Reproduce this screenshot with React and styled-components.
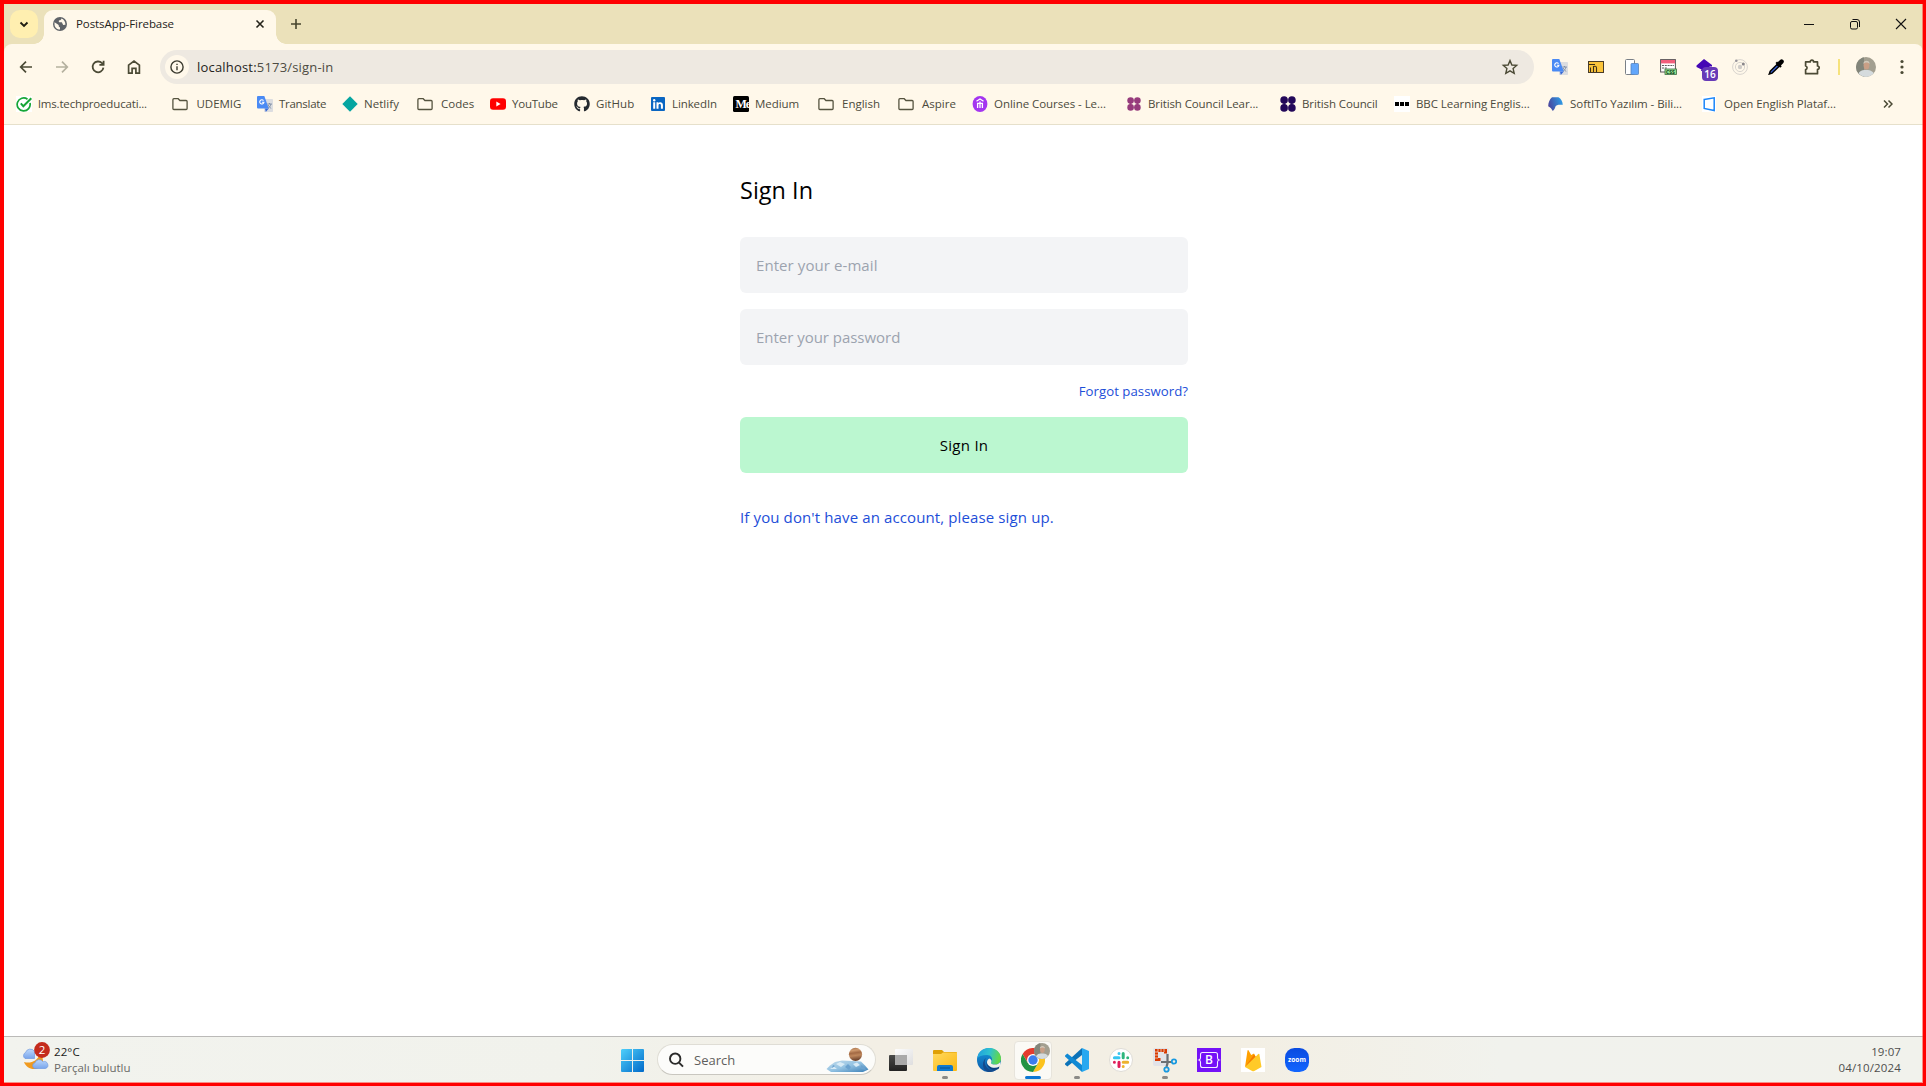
import React from "react";
import styled, { createGlobalStyle } from "styled-components";
import { FaGithub } from "react-icons/fa";

const GlobalStyle = createGlobalStyle`
  *, *::before, *::after { box-sizing: border-box; }
  body { margin: 0; background: #fff; font-family: "Open Sans", "Noto Sans", sans-serif; }
  svg { display: block; flex: none; }
`;

/* ---------- frame ---------- */

const Screen = styled.div`
  position: relative;
  width: 1926px;
  height: 1086px;
  overflow: hidden;
  display: flex;
  flex-direction: column;
  background: #fff;
  border: solid #ff0000;
  border-width: 4px 3px 3px 4px;

  &::after {
    content: "";
    position: absolute;
    inset: 0;
    pointer-events: none;
    border: solid rgba(255, 60, 50, 0.55);
    border-width: 0 1px 1px 0;
  }
`;

const Label = styled.span`
  font-size: ${(p) => p.$size || 11.5}px;
  letter-spacing: ${(p) => p.$ls || 0}px;
  color: ${(p) => p.$color || "#4b4a3c"};
  line-height: 16px;
  white-space: pre;
`;

/* ---------- browser chrome ---------- */

const Browser = styled.header`
  flex: none;
  background: #ebe1ba;
`;

const TabStrip = styled.div`
  display: flex;
  height: 40px;
`;

const TabSearch = styled.button`
  width: 28px;
  height: 28px;
  margin: 6px 6px 0 6px;
  padding: 0;
  border: 0;
  border-radius: 10px;
  background: #ffefb0;
  display: grid;
  place-items: center;
`;

const Tab = styled.div`
  position: relative;
  width: 232px;
  height: 34px;
  margin-top: 6px;
  padding: 0 10px 6px 9px;
  border-radius: 9px 9px 0 0;
  background: #fff8ea;
  display: flex;
  align-items: center;

  &::before,
  &::after {
    content: "";
    position: absolute;
    bottom: 0;
    width: 10px;
    height: 10px;
  }
  &::before {
    left: -10px;
    background: radial-gradient(circle at 0 0, transparent 9.5px, #fff8ea 10px);
  }
  &::after {
    right: -10px;
    background: radial-gradient(circle at 100% 0, transparent 9.5px, #fff8ea 10px);
  }
`;

const TabTitle = styled(Label)`
  flex: 1;
  margin-left: 9px;
  color: #24231a;
`;

const NewTab = styled.div`
  margin: 12px 0 0 12px;
`;

const WindowControls = styled.div`
  margin-left: auto;
  height: 40px;
  display: grid;
  grid-template-columns: repeat(3, 46px);
  place-items: center;
  margin-right: -1px;
`;

const Toolbar = styled.div`
  height: 46px;
  display: flex;
  align-items: center;
  background: #fff8ea;
  border-radius: 8px 8px 0 0;
`;

const NavButtons = styled.div`
  display: grid;
  grid-template-columns: repeat(4, 36px);
  place-items: center;
  margin-left: 4px;
`;

const AddressBar = styled.div`
  width: 1374px;
  height: 34px;
  margin-left: 8px;
  padding: 0 15px 0 5px;
  border-radius: 17px;
  background: #eee9e1;
  display: flex;
  align-items: center;
`;

const SiteInfo = styled.div`
  width: 24px;
  height: 24px;
  border-radius: 50%;
  background: #fff8ea;
  display: grid;
  place-items: center;
`;

const Url = styled(Label)`
  flex: 1;
  margin-left: 8px;
  font-size: 13px;
  letter-spacing: 0.19px;
  color: #4d4b42;

  b {
    font-weight: 400;
    color: #24231b;
  }
`;

const Extensions = styled.div`
  display: grid;
  grid-template-columns: repeat(8, 36px);
  place-items: center;
  margin-left: 8px;
`;

const ExtensionWithBadge = styled.div`
  position: relative;
  width: 16px;
  height: 16px;
`;

const Badge = styled.span`
  position: absolute;
  left: 6px;
  top: 8px;
  width: 16px;
  height: 14px;
  border-radius: 4px;
  background: #673ab7;
  color: #fff;
  font-size: 10px;
  font-weight: 600;
  line-height: 14px;
  text-align: center;
`;

const Divider = styled.div`
  width: 2px;
  height: 16px;
  margin-left: 8px;
  background: #f6e27c;
`;

const Avatar = styled.div`
  width: 20px;
  height: 20px;
  margin-left: 16px;
  border-radius: 50%;
  overflow: hidden;
`;

const MenuButton = styled.div`
  margin-left: 18px;
`;

const BookmarksBar = styled.nav`
  height: 35px;
  padding: 0 0 6px 12px;
  display: flex;
  align-items: center;
  background: #fff8ea;
  border-bottom: 1px solid #e6e0cb;
`;

const Bookmark = styled.a`
  width: ${(p) => p.$w}px;
  flex: none;
  display: flex;
  align-items: center;
  gap: ${(p) => p.$gap || 6}px;
`;

const Overflow = styled.div`
  margin-left: 26px;
`;

/* ---------- sign in page ---------- */

const Page = styled.main`
  flex: 1;
  display: flex;
  justify-content: center;
  padding: 47px 0 0 1px;
`;

const Form = styled.form`
  width: 448px;
  display: flex;
  flex-direction: column;
`;

const Title = styled.h1`
  margin: 0 0 29px;
  font-size: 23.4px;
  line-height: 36px;
  font-weight: 400;
  letter-spacing: 0.05px;
  color: #000;
`;

const Field = styled.input`
  height: 56px;
  margin: 0 0 16px;
  padding: 0 16px;
  border: 0;
  border-radius: 6px;
  background: #f3f4f6;
  font: 400 15px "Open Sans", "Noto Sans", sans-serif;
  letter-spacing: ${(p) => p.$ls}px;

  &::placeholder {
    color: #9ca3af;
    opacity: 1;
  }
`;

const Forgot = styled.a`
  align-self: flex-end;
  height: 20px;
  margin-bottom: 16px;
  font-size: 13.2px;
  line-height: 20px;
  letter-spacing: 0.04px;
  color: #1d4ed8;
`;

const Submit = styled.button`
  height: 56px;
  border: 0;
  border-radius: 6px;
  background: #bbf7d0;
  font: 400 15px "Open Sans", "Noto Sans", sans-serif;
  letter-spacing: 0.3px;
  color: #000;
`;

const SignUp = styled.a`
  margin-top: 32px;
  font-size: 15px;
  line-height: 24px;
  letter-spacing: 0.12px;
  color: #1d4ed8;
`;

/* ---------- taskbar ---------- */

const Taskbar = styled.footer`
  flex: none;
  height: 47px;
  display: flex;
  border-top: 1px solid #bbbab8;
  background: linear-gradient(90deg, #f2f3ee 0%, #f1f2ec 30%, #f3efe5 45%, #f3efe4 65%, #f1f2ed 78%, #f1f2ec 100%);
`;

const Weather = styled.div`
  width: 606px;
  padding: 5px 0 0 17px;
  display: flex;
`;

const WeatherIcon = styled.div`
  width: 31px;
  margin-right: 2px;
`;

const Lines = styled.div`
  display: flex;
  flex-direction: column;
  padding-top: ${(p) => p.$top || 0}px;
  text-align: ${(p) => p.$align || "left"};
`;

const StartCell = styled.div`
  width: 47px;
  padding: 12px 0 0 11px;
`;

const SearchBox = styled.div`
  width: 219px;
  height: 31px;
  margin: 7px 3px 0 0;
  padding: 0 6px 0 10px;
  display: flex;
  align-items: center;
  border-radius: 16px;
  border: 1px solid #dfddd5;
  border-bottom-color: #c9c7c0;
  background: #fcfcfa;
`;

const SearchLabel = styled(Label)`
  flex: 1;
  margin-left: 10px;
`;

const AppCell = styled.div`
  position: relative;
  width: 44px;
  height: 46px;
  display: grid;
  justify-items: center;
  align-content: start;
  padding-top: 11px;

  &::after {
    content: "";
    display: ${(p) => (p.$running || p.$active ? "block" : "none")};
    position: absolute;
    bottom: 4px;
    left: 50%;
    transform: translateX(-50%);
    width: ${(p) => (p.$active ? 16 : 6)}px;
    height: 3px;
    border-radius: 2px;
    background: ${(p) => (p.$active ? "#0d78d4" : "#8b8a86")};
  }
`;

const ActiveTile = styled.div`
  position: absolute;
  left: 3px;
  top: 4px;
  width: 38px;
  height: 39px;
  border-radius: 4px;
  background: #fbfaf6;
  border: 1px solid #e7e4dc;
`;

const Over = styled.div`
  position: relative;
`;

const ProfileBadge = styled.div`
  position: absolute;
  right: -5px;
  top: -5px;
  width: 16px;
  height: 16px;
  border-radius: 50%;
  overflow: hidden;
`;

const Clock = styled.div`
  margin-left: auto;
  padding: 7px 22px 0 0;
`;

/* ---------- icons ---------- */

const ink = "#4b4a35";

const Stroke = ({ size = 16, w = 1.7, c = ink, children }) => (
  <svg width={size} height={size} viewBox={`0 0 ${size} ${size}`} fill="none" stroke={c} strokeWidth={w}>
    {children}
  </svg>
);

const Globe = () => (
  <svg width="14" height="14" viewBox="0 0 14 14">
    <circle cx="7" cy="7" r="7" fill="#5f6368" />
    <path d="M1.5 5.2 5 7.6c1 .7.8 1.5.8 2l1.2.8v2.1c-3 0-5.6-2.4-5.5-5.6zM8.2 1.6c.2 1-.3 1.4-1.2 1.6-.9.1-1.4.4-1.2 1.2.1.8.9 1 2 .9 1.4-.1 1.5.6 1.7 1.5.2.9 1 1.1 2.8 1.1A5.6 5.6 0 0 0 8.2 1.6z" fill="#fff8ea" />
  </svg>
);

const Folder = () => (
  <Stroke w={1.3} c="#55533f">
    <path d="M1.9 2.7h4.3l1.7 1.8h6.2q1 0 1 1v7q0 1-1 1H1.9q-1 0-1-1V3.7q0-1 1-1z" />
  </Stroke>
);

const Translate = () => (
  <svg width="16" height="16" viewBox="0 0 16 16">
    <rect x="7" y="3" width="9" height="13" rx=".8" fill="#dcdde0" />
    <path d="M10.3 8h4.6M12.5 7v1M14 8c-.4 1.8-1.5 3.3-3 4.3M11.2 9c.5 1.4 1.5 2.5 3 3.3" stroke="#7b8ba3" strokeWidth=".9" fill="none" />
    <path d="M8 12.5h3.8L8.8 16z" fill="#3367d6" />
    <path d="M1 0h6.3l4.5 12.5H1q-1 0-1-1V1q0-1 1-1z" fill="#4a8af4" />
    <path d="M6.5 4.6a2.1 2.1 0 1 0 .4 1.7H4.900" stroke="#fff" strokeWidth="1.1" fill="none" />
  </svg>
);

const LmsCheck = () => (
  <svg width="16" height="16" viewBox="0 0 16 16" fill="none">
    <rect width="16" height="16" fill="#fff" />
    <path d="M14 7A6.5 6.5 0 1 1 11.5 3.2" stroke="#16a637" strokeWidth="1.7" />
    <path d="M4.8 7.4 7.3 10.2 15.3 2.2" stroke="#16a637" strokeWidth="2" />
  </svg>
);

const Netlify = () => (
  <svg width="16" height="16" viewBox="0 0 16 16"><path d="M8 .3 15.7 8 8 15.7.3 8z" fill="#05a5a0" /></svg>
);

const YouTube = () => (
  <svg width="16" height="16" viewBox="0 0 16 16">
    <rect y="2.3" width="16" height="11.4" rx="3" fill="#f00" />
    <path d="M6.3 5.6 10.6 8l-4.3 2.4z" fill="#fff" />
  </svg>
);

const LinkedIn = () => (
  <svg width="14" height="14" viewBox="0 0 14 14">
    <rect width="14" height="14" rx="1" fill="#0a66c2" />
    <path d="M2.2 5.3h2v6.5h-2zM5.5 5.3h1.9v.9c.8-1.5 4.5-1.6 4.5 1.7v3.9h-2V8.4c0-2-2.4-1.8-2.4 0v3.4h-2z" fill="#fff" />
    <circle cx="3.2" cy="3.2" r="1.2" fill="#fff" />
  </svg>
);

const Medium = () => (
  <svg width="16" height="16" viewBox="0 0 16 16">
    <defs><clipPath id="medium"><rect width="16" height="16" rx="1.5" /></clipPath></defs>
    <g clipPath="url(#medium)">
      <rect width="16" height="16" fill="#000" />
      <text x="2.5" y="12" fontFamily="Liberation Serif, serif" fontWeight="700" fontSize="12" fill="#fff" letterSpacing="-1">Me</text>
    </g>
  </svg>
);

const Udemy = () => (
  <svg width="16" height="16" viewBox="0 0 16 16" fill="none" stroke="#fff">
    <ellipse cx="8" cy="8" rx="7.4" ry="8" fill="#a435f0" stroke="none" />
    <path d="M4.5 5.2 8 3l3.5 2.2" strokeWidth="1.3" />
    <path d="M5.6 12V7.3h4.8V12M8 5.6v6.4" strokeWidth="1.3" />
  </svg>
);

const Dots4 = ({ color, r }) => (
  <svg width="16" height="16" viewBox="0 0 16 16" fill={color}>
    <circle cx={8 - r} cy={8 - r} r={r - 0.1} /><circle cx={8 + r} cy={8 - r} r={r - 0.1} />
    <circle cx={8 - r} cy={8 + r} r={r - 0.1} /><circle cx={8 + r} cy={8 + r} r={r - 0.1} />
    <path d="M3.5 6h2v4h-2zM10.5 6h2v4h-2z" opacity=".6" />
  </svg>
);

const Bbc = () => (
  <svg width="16" height="16" viewBox="0 0 16 16">
    <rect width="16" height="16" fill="#fff" />
    <path d="M1 6h4v4H1zM6 6h4v4H6zM11 6h4v4h-4z" fill="#000" />
  </svg>
);

const SoftIto = () => (
  <svg width="16" height="16" viewBox="0 0 16 16">
    <defs><linearGradient id="ito" x1="0" y1=".6" x2="1" y2=".3"><stop stopColor="#4b449b" /><stop offset="1" stopColor="#2d9ee8" /></linearGradient></defs>
    <path d="M4 1.2h6.5c2.5 1.5 4 4 4.3 7.6-4.5-.3-6.8.2-7.3 1.7-.5 2-1.3 3.2-2.7 4.5-1-2-2.3-3.6-4.6-4.8C.3 6.500 1.500 3.500 4 1.200z" fill="url(#ito)" />
  </svg>
);

const OpenEnglish = () => (
  <svg width="16" height="16" viewBox="0 0 16 16">
    <rect width="14" height="16" fill="#fff" />
    <path d="M2.200 3.500 12.200 1.800v12.700L2.200 12.500z" fill="none" stroke="#1b86f9" strokeWidth="1.5" />
  </svg>
);

const Face = ({ size }) => (
  <svg width={size} height={size} viewBox="0 0 20 20">
    <rect width="20" height="20" fill="#a39f90" />
    <path d="M0 0h8v20H0z" fill="#82857a" />
    <path d="M2 20c0-5.500 3-7 8-7s8 1.500 9 7z" fill="#d5dbdd" />
    <ellipse cx="10.500" cy="8.200" rx="2.900" ry="4.200" fill="#c99f86" />
    <path d="M7.300 7C7 2.500 14 2.500 13.700 7 12 5 9 5 7.300 7z" fill="#cfc8ba" />
  </svg>
);

const MagicFolder = () => (
  <svg width="16" height="12" viewBox="0 0 16 12">
    <rect x=".5" y=".5" width="15" height="11" fill="#fbc43a" stroke="#4a3c28" strokeWidth="1" />
    <path d="M1 3.500h6M2.500 11V6.500M5.500 11V5.500q3-1 3 1.500v4" fill="none" stroke="#3a2e18" strokeWidth="1.100" />
  </svg>
);

const Devices = () => (
  <svg width="14" height="16" viewBox="0 0 14 16">
    <rect x=".5" y=".5" width="9" height="15" rx="1" fill="#fff" stroke="#7a8087" strokeWidth="1" />
    <rect x="6" y="4.500" width="7.500" height="11" rx=".8" fill="#62a6fb" stroke="#5583bd" strokeWidth=".8" />
  </svg>
);

const CssViewer = () => (
  <svg width="17" height="16" viewBox="0 0 17 16">
    <rect x=".6" y=".6" width="14.800" height="12.400" fill="#fff" stroke="#5a5256" strokeWidth="1" />
    <rect x="1" y="1" width="14" height="3.400" fill="#f25f7c" />
    <path d="M2 6.500h12M2 9h5" stroke="#5b5b5b" strokeWidth="1" strokeDasharray="2 .8" />
    <rect x="5" y="10" width="11.500" height="5.500" fill="#8fe08e" stroke="#3c6b41" strokeWidth=".8" />
    <text x="6" y="14.700" fontFamily="Open Sans, sans-serif" fontWeight="700" fontSize="5" fill="#123c1a">CSS</text>
  </svg>
);

const PurpleHat = () => (
  <svg width="16" height="16" viewBox="0 0 16 16"><path d="M8 0 16 6v1.500h-2.500V12H5l.5-1.500L.5 8V6.500z" fill="#4407b5" /></svg>
);

const Orbit = () => (
  <svg width="16" height="16" viewBox="0 0 16 16" fill="none" stroke="#d8d4ce">
    <circle cx="8" cy="8" r="7.400" /><circle cx="8" cy="8" r="4.600" />
    <circle cx="8" cy="8" r="2.200" fill="#cfccc8" stroke="none" />
    <circle cx="4.300" cy="1.800" r="1.300" fill="#97949a" stroke="none" />
    <circle cx="11.300" cy="5" r="1.500" fill="#88858a" stroke="none" />
  </svg>
);

const Dropper = () => (
  <svg width="16" height="16" viewBox="0 0 16 16">
    <path d="M9.600 5 2.300 12.200 1.300 15l2.800-.9L11.500 7z" fill="#3b64d8" stroke="#000" strokeWidth="1.500" />
    <path d="M8.300 3.300 13 8" stroke="#000" strokeWidth="2.200" />
    <path d="M10.800 5.400 13.600 2.600" stroke="#000" strokeWidth="4.400" strokeLinecap="round" />
  </svg>
);

const Puzzle = () => (
  <Stroke w={1.7}>
    <path d="M1.600 2.900h4.600a1.700 1.700 0 0 1 3.400 0H13.500v4.100a1.700 1.700 0 0 1 0 3.400v4.300H1.600v-4a1.900 1.900 0 0 0 0-3.700z" strokeLinejoin="round" />
  </Stroke>
);

const WeatherGlyph = () => (
  <svg width="31" height="32" viewBox="0 -2 31 32">
    <defs><linearGradient id="cl" x2="0" y2="1"><stop stopColor="#bcd8fb" /><stop offset="1" stopColor="#78a5ec" /></linearGradient></defs>
    <path d="M19 10c5 4 4 14-5 15-5 .4-9-2-11-7 7 2 13-1 16-8z" fill="#f09a1e" />
    <path d="M4 14.500a3.500 3.500 0 0 1 .5-6 5 5 0 0 1 9-1v7z" fill="url(#cl)" stroke="#6f9ae0" strokeWidth=".7" />
    <path d="M13.500 24.500a3 3 0 0 1 .5-5.700 4.400 4.400 0 0 1 8-1 3.500 3.500 0 0 1 2.500 6.700z" fill="url(#cl)" stroke="#6f9ae0" strokeWidth=".7" />
    <circle cx="21" cy="6" r="7.900" fill="#c42b1c" />
    <text x="21" y="10" textAnchor="middle" fontFamily="Open Sans, sans-serif" fontSize="11.500" fill="#fff">2</text>
  </svg>
);

const Windows = () => (
  <svg width="23" height="23" viewBox="0 0 23 23">
    <defs><linearGradient id="win" gradientUnits="userSpaceOnUse" x1="0" y1="0" x2="23" y2="23"><stop stopColor="#4fd0fb" /><stop offset="1" stopColor="#0069c9" /></linearGradient></defs>
    <path d="M1 0h10v11H0V1zM12 0h10q1 0 1 1v10H12zM0 12h11v11H1q-1 0-1-1zM12 12h11v10q0 1-1 1H12z" fill="url(#win)" />
  </svg>
);

const SearchArt = () => (
  <svg width="44" height="26" viewBox="0 0 44 26">
    <defs>
      <linearGradient id="planet" x2=".15" y2="1"><stop stopColor="#a06c46" /><stop offset=".25" stopColor="#cf9a6e" /><stop offset=".45" stopColor="#a36a44" /><stop offset=".65" stopColor="#bf875c" /><stop offset="1" stopColor="#6e432c" /></linearGradient>
      <linearGradient id="ice" x2="1" y2="1"><stop stopColor="#c3dcec" /><stop offset=".5" stopColor="#93c2e2" /><stop offset="1" stopColor="#3b7fb6" /></linearGradient>
    </defs>
    <path d="M1.500 22 5 18.500l5-3.500 7-1.500 10 .5 9 .5 4 4 3.500 4L38 25H6z" fill="url(#ice)" />
    <path d="m11 17 4-2 5 2-4 3zM28 17l4-1.500 3 2.500-4 2zM5 22l4-2.500 3 2.500z" fill="#d8ebf6" />
    <path d="m20 20 3-3 3 3-2 3zM36 18l3 2 2 3-5-1zM8 18l2 1-3 2z" fill="#6ba2cf" />
    <circle cx="30.500" cy="7.300" r="6.600" fill="url(#planet)" />
  </svg>
);

const TaskView = () => (
  <svg width="24" height="24" viewBox="0 0 24 24">
    <defs>
      <linearGradient id="tvb" x2="0" y2="1"><stop stopColor="#4a4a49" /><stop offset="1" stopColor="#222" /></linearGradient>
      <linearGradient id="tvf" x2="1" y2="1"><stop stopColor="#fdfdfd" /><stop offset="1" stopColor="#dededf" /></linearGradient>
    </defs>
    <rect y="7" width="18" height="16" rx="1" fill="url(#tvb)" />
    <rect x="6" y="1" width="18" height="16" rx="1" fill="url(#tvf)" />
    <path d="M6 7h12v10H6z" fill="#a9a9a9" />
  </svg>
);

const Explorer = () => (
  <svg width="24" height="24" viewBox="0 0 24 24">
    <defs><linearGradient id="exp" x2="1" y2="1"><stop stopColor="#ffd95e" /><stop offset="1" stopColor="#fcb813" /></linearGradient></defs>
    <path d="M0 3q0-1 1-1h8l2 2h12q1 0 1 1v4H0z" fill="#dfa005" />
    <path d="M0 6h8l2-1.500h14V22q0 1-1 1H1q-1 0-1-1z" fill="url(#exp)" />
    <path d="M4 23v-4q0-2 2-2h12q2 0 2 2v4z" fill="#0f7ad0" />
    <path d="M7 20h10" stroke="#084f8e" strokeWidth="1" />
  </svg>
);

const Edge = () => (
  <svg width="24" height="24" viewBox="0 0 24 24">
    <defs>
      <linearGradient id="ea" x2="1" y2=".2"><stop stopColor="#1e9de0" /><stop offset=".55" stopColor="#2fc2cf" /><stop offset="1" stopColor="#62d849" /></linearGradient>
      <linearGradient id="eb" x2="0" y2="1"><stop stopColor="#1799dd" /><stop offset="1" stopColor="#0c5aa8" /></linearGradient>
    </defs>
    <circle cx="12" cy="12" r="12" fill="url(#eb)" />
    <path d="M.2 10.500C1 4 6 0 12 0c7 0 12 4.800 12 10.500 0 4-3 6-6.300 6-3.500 0-4.200-1.500-3.400-2.600 2.200-3.300-.4-6.800-4.300-6.800C5 7.100 1.500 8.500.2 10.500z" fill="url(#ea)" />
    <path d="M9 10c-3 4-.5 11.500 6 12.200 3 .2 5.500-1 7.500-3.600C20 23 16 24.200 11.500 24 5.500 23 4 14 9 10z" fill="#144a8c" />
    <path d="M9.500 12.500c-.3 3.500 3 7.300 8 7.300 2 0 3.500-.5 5-1.400l-1 2.600c-6 2.500-13-1-12-8.500z" fill="#0f3f7d" />
    <path d="M14.300 13.900c-.8 1.100 0 2.600 3.400 2.600 2.300 0 4.600-1 5.600-2.600.2 1.600.1 3.200-.9 4.600-5 3-11.500.5-12.400-4 0-2 1-3.400 2.200-4.100 1.800.6 2.800 2 2.100 3.500z" fill="#f4f1e8" />
  </svg>
);

const Chrome = () => (
  <svg width="24" height="24" viewBox="0 0 24 24">
    <path d="M1.600 6A12 12 0 0 1 22.400 6H12L6.800 15z" fill="#e33b2e" />
    <path d="M22.400 6A12 12 0 0 1 12 24l5.200-9L12 6z" fill="#fcc31e" />
    <path d="M1.600 6A12 12 0 0 0 12 24l5.200-9H6.800z" fill="#229342" />
    <circle cx="12" cy="12" r="6" fill="#fff" />
    <circle cx="12" cy="12" r="4.700" fill="#3b7ded" />
  </svg>
);

const VsCode = () => (
  <svg width="24" height="24" viewBox="0 0 24 24">
    <path d="M17 0 24 3v18l-7 3z" fill="#27a8f0" />
    <path d="M17 0v7L2.300 18.500.3 16.700q-.6-.8 0-1.500z" fill="#0b72b8" />
    <path d="M17 24v-7L2.300 5.500.3 7.300q-.6.8 0 1.500z" fill="#1089d4" />
  </svg>
);

const Slack = () => (
  <svg width="24" height="24" viewBox="0 0 24 24">
    <circle cx="12" cy="12" r="11.500" fill="#fff" stroke="#dedbd5" />
    <g strokeWidth="3" strokeLinecap="round">
      <path d="M10 5.400h0M5.400 9.800h4.600" stroke="#36c5f0" />
      <path d="M14.200 5.400v4.400M18.700 9.800h0" stroke="#2eb67d" />
      <path d="M14.200 14.200h4.500M14.200 18.600h0" stroke="#ecb22e" />
      <path d="M10 14.200v4.400M5.400 14.200h0" stroke="#e01e5a" />
    </g>
  </svg>
);

const Snip = () => (
  <svg width="24" height="26" viewBox="0 0 24 26" fill="none">
    <rect x="0" y="0" width="16" height="18" rx="2" fill="#e2e3e8" />
    <path d="M2 1h12v4.500h-3V4H5v6h2.500v3H2z" fill="#d83b01" />
    <path d="M5 1v3M8 1v3M11 1v3M2 4h3M2 7h3M2 10h3" stroke="#f3d8ce" strokeWidth=".8" />
    <path d="M14.500 6v9l-1 4M8 14h11" stroke="#6b7075" strokeWidth="2.200" />
    <circle cx="21" cy="13.500" r="2.200" stroke="#1899e0" strokeWidth="1.800" />
    <circle cx="13.500" cy="21.500" r="2.200" stroke="#1899e0" strokeWidth="1.800" />
  </svg>
);

const Bootstrap = () => (
  <svg width="24" height="24" viewBox="0 0 24 24">
    <rect width="24" height="24" fill="#7411f7" />
    <path d="M5.500 4.500h13q2 0 2 2v3.300q0 1.700 1.500 2.200-1.500.5-1.500 2.200v3.300q0 2-2 2h-13q-2 0-2-2v-3.300Q3.500 12.500 2 12q1.500-.5 1.500-2.200V6.500q0-2 2-2z" fill="none" stroke="#f5edff" strokeWidth="1.100" />
    <text x="12" y="16.200" textAnchor="middle" fontFamily="Open Sans, sans-serif" fontWeight="600" fontSize="12" fill="#fff">B</text>
  </svg>
);

const Firebase = () => (
  <svg width="24" height="24" viewBox="0 0 24 24">
    <rect width="24" height="24" fill="#fff" />
    <path d="M4 19 6.500 2.500q.4-1 1-.2L10.200 7 13 5.500 16 11 4 19z" fill="#ffa000" />
    <path d="m4 19 9-12.500L16 11z" fill="#f57c00" />
    <path d="M4 19 17.300 6q.8-.6 1.100.4L20.500 19l-7.200 4q-1.100.5-2.200 0z" fill="#ffca28" />
  </svg>
);

const Zoom = () => (
  <svg width="24" height="24" viewBox="0 0 24 24">
    <defs><linearGradient id="zm" x2="0" y2="1"><stop stopColor="#0a4be0" /><stop offset="1" stopColor="#1266ff" /></linearGradient></defs>
    <rect width="24" height="24" rx="9.500" fill="url(#zm)" />
    <text x="12" y="13.800" textAnchor="middle" fontFamily="Open Sans, sans-serif" fontWeight="700" fontSize="6.600" fill="#fff">zoom</text>
  </svg>
);

const bookmarks = [
  { w: 156, ls: -0.16, icon: <LmsCheck />, text: "lms.techproeducati..." },
  { w: 85, gap: 8.5, ls: -0.05, icon: <Folder />, text: "UDEMIG" },
  { w: 85, ls: -0.28, icon: <Translate />, text: "Translate" },
  { w: 75, ls: 0.05, icon: <Netlify />, text: "Netlify" },
  { w: 73, gap: 8, ls: 0.05, icon: <Folder />, text: "Codes" },
  { w: 84, ls: -0.22, icon: <YouTube />, text: "YouTube" },
  { w: 77, ls: 0.05, icon: <FaGithub size={16} color="#24292f" />, text: "GitHub" },
  { w: 82, gap: 7, ls: -0.1, icon: <LinkedIn />, text: "LinkedIn" },
  { w: 85, ls: -0.06, icon: <Medium />, text: "Medium" },
  { w: 80, gap: 8, icon: <Folder />, text: "English" },
  { w: 74, gap: 8, icon: <Folder />, text: "Aspire" },
  { w: 154, ls: -0.04, icon: <Udemy />, text: "Online Courses - Le..." },
  { w: 154, ls: -0.11, icon: <Dots4 color="#963b7c" r={3.4} />, text: "British Council Lear..." },
  { w: 114, ls: -0.1, icon: <Dots4 color="#230859" r={3.9} />, text: "British Council" },
  { w: 154, ls: -0.06, icon: <Bbc />, text: "BBC Learning Englis..." },
  { w: 154, ls: -0.04, icon: <SoftIto />, text: "SoftITo Yazılım - Bili..." },
  { w: 155, ls: -0.05, icon: <OpenEnglish />, text: "Open English Plataf..." },
];

export default function App() {
  return (
    <Screen>
      <GlobalStyle />
      <Browser>
        <TabStrip>
          <TabSearch type="button">
            <Stroke size={10} c="#1f1d12" w={1.9}><path d="M1.500 3.500 5 7l3.500-3.500" /></Stroke>
          </TabSearch>
          <Tab>
            <Globe />
            <TabTitle $ls={-0.08}>PostsApp-Firebase</TabTitle>
            <Stroke size={12} c="#24231a" w={1.6}><path d="m2.500 2.500 7 7m0-7-7 7" /></Stroke>
          </Tab>
          <NewTab><Stroke size={16} c="#48462f" w={1.6}><path d="M8 3v10M3 8h10" /></Stroke></NewTab>
          <WindowControls>
            <Stroke size={12} c="#111" w={1}><path d="M1 6.500h10" /></Stroke>
            <Stroke size={12} c="#111" w={1}><rect x="1.500" y="3.500" width="7" height="7.500" rx="1.500" /><path d="M3.500 1.500H8q2.500 0 2.500 2.500v5" /></Stroke>
            <Stroke size={12} c="#111" w={1.1}><path d="m1 1 10 10M11 1 1 11" /></Stroke>
          </WindowControls>
        </TabStrip>

        <Toolbar>
          <NavButtons>
            <Stroke w={1.7}><path d="M14 8H3.500M8 2.700 2.700 8 8 13.300" /></Stroke>
            <Stroke w={1.7} c="#b5b19f"><path d="M2 8h10.500M8 2.700 13.300 8 8 13.300" /></Stroke>
            <Stroke w={1.8}><path d="M13.400 8.600A5.400 5.400 0 1 1 12 4.200l1.500 1.500M13.600 1.800v4.100H9.400" /></Stroke>
            <Stroke w={1.7}><path d="M2.600 6.200 8 2l5.400 4.200v8H9.900V9.300H6.100v4.900H2.600z" /></Stroke>
          </NavButtons>
          <AddressBar>
            <SiteInfo>
              <Stroke size={14} w={1.4} c="#3c3b2f"><circle cx="7" cy="7" r="6.100" /><path d="M7 6.300v4M7 3.700v1.400" /></Stroke>
            </SiteInfo>
            <Url><b>localhost:</b>5173/sign-in</Url>
            <Stroke size={18} w={1.4}><path d="m9 2.600 1.900 4.400 4.800.4-3.600 3.200 1.100 4.700L9 12.800l-4.200 2.500 1.100-4.700-3.600-3.200L7.100 7z" /></Stroke>
          </AddressBar>
          <Extensions>
            <Translate />
            <MagicFolder />
            <Devices />
            <CssViewer />
            <ExtensionWithBadge><PurpleHat /><Badge>16</Badge></ExtensionWithBadge>
            <Orbit />
            <Dropper />
            <Puzzle />
          </Extensions>
          <Divider />
          <Avatar><Face size={20} /></Avatar>
          <MenuButton>
            <svg width="16" height="16" viewBox="0 0 16 16" fill={ink}><circle cx="8" cy="2.500" r="1.600" /><circle cx="8" cy="8" r="1.600" /><circle cx="8" cy="13.500" r="1.600" /></svg>
          </MenuButton>
        </Toolbar>

        <BookmarksBar>
          {bookmarks.map((b, i) => (
            <Bookmark key={i} $w={b.w} $gap={b.gap}>
              {b.icon}
              <Label $ls={b.ls}>{b.text}</Label>
            </Bookmark>
          ))}
          <Overflow>
            <Stroke size={10} w={1.5}><path d="m1 1.500 3.500 3.500L1 8.500M5.500 1.500 9 5 5.500 8.500" /></Stroke>
          </Overflow>
        </BookmarksBar>
      </Browser>

      <Page>
        <Form>
          <Title>Sign In</Title>
          <Field type="email" placeholder="Enter your e-mail" $ls={0.08} />
          <Field type="password" placeholder="Enter your password" $ls={-0.03} />
          <Forgot>Forgot password?</Forgot>
          <Submit type="button">Sign In</Submit>
          <SignUp>If you don't have an account, please sign up.</SignUp>
        </Form>
      </Page>

      <Taskbar>
        <Weather>
          <WeatherIcon><WeatherGlyph /></WeatherIcon>
          <Lines $top={2}>
            <Label $ls={0.1} $color="#1c1c1b">22°C</Label>
            <Label $ls={-0.02} $color="#6a6a67">Parçalı bulutlu</Label>
          </Lines>
        </Weather>
        <StartCell><Windows /></StartCell>
        <SearchBox>
          <Stroke w={1.9} c="#2b2b2a"><circle cx="7.200" cy="6.700" r="5.200" /><path d="m11 10.700 4 4" /></Stroke>
          <SearchLabel $size={13} $color="#5f5f5d">Search</SearchLabel>
          <SearchArt />
        </SearchBox>
        <AppCell><TaskView /></AppCell>
        <AppCell $running><Explorer /></AppCell>
        <AppCell><Edge /></AppCell>
        <AppCell $active>
          <ActiveTile />
          <Over><Chrome /><ProfileBadge><Face size={16} /></ProfileBadge></Over>
        </AppCell>
        <AppCell $running><VsCode /></AppCell>
        <AppCell><Slack /></AppCell>
        <AppCell $running><Snip /></AppCell>
        <AppCell><Bootstrap /></AppCell>
        <AppCell><Firebase /></AppCell>
        <AppCell><Zoom /></AppCell>
        <Clock>
          <Lines $align="right">
            <Label $ls={0.1} $color="#4e4e4c">19:07</Label>
            <Label $ls={0.14} $color="#4e4e4c">04/10/2024</Label>
          </Lines>
        </Clock>
      </Taskbar>
    </Screen>
  );
}
